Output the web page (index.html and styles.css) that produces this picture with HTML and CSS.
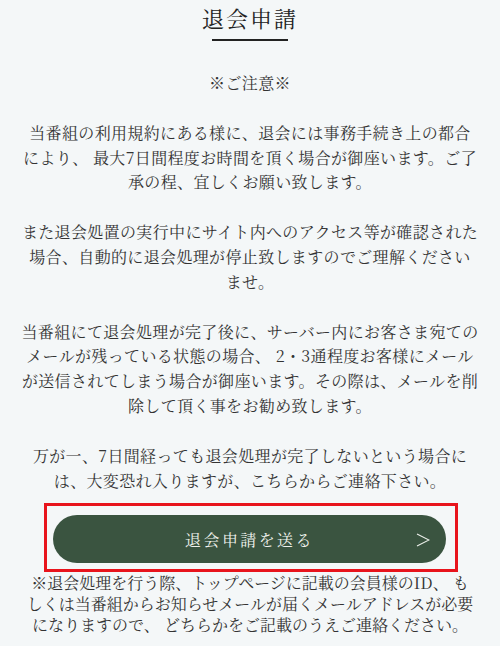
FILE: index.html
```html
<!DOCTYPE html>
<html lang="ja">
  <head>
    <meta charset="utf-8" />
    <title>退会申請</title>
    <link rel="stylesheet" href="styles.css">
  </head>
  <body>
    <div class="withdraw">
      <h1 class="withdraw-title">退会申請</h1>

      <p class="notice-head">※ご注意※</p>
      <p class="notice">当番組の利用規約にある様に、退会には事務手続き上の都合<br>により、 最大7日間程度お時間を頂く場合が御座います。ご了承の程、宜しくお願い致します。</p>
      <p class="notice">また退会処置の実行中にサイト内へのアクセス等が確認された場合、自動的に退会処理が停止致しますのでご理解ください<br>ませ。</p>
      <p class="notice">当番組にて退会処理が完了後に、サーバー内にお客さま宛てのメールが残っている状態の場合、 2・3通程度お客様にメールが送信されてしまう場合が御座います。その際は、メールを削除して頂く事をお勧め致します。</p>
      <p class="notice notice-last">万が一、7日間経っても退会処理が完了しないという場合には、大変恐れ入りますが、こちらからご連絡下さい。</p>

      <div class="button-frame">
        <a class="send-btn" href="#">
          退会申請を送る
          <svg class="send-arrow" width="14" height="14" viewBox="0 0 14 14">
            <polyline points="1,1 13,7 1,13" fill="none" stroke="currentColor" stroke-width="1.1" />
          </svg>
        </a>
      </div>

      <p class="foot-note">※退会処理を行う際、トップページに記載の会員様のID、 も<br>しくは当番組からお知らせメールが届くメールアドレスが必要になりますので、 どちらかをご記載のうえご連絡ください。</p>
    </div>
  </body>
</html>
```

FILE: styles.css
```css
body {
  margin: 0;
  padding: 0;
  background: #f4f7f8;
  color: #333;
  font-family: "Noto Serif CJK JP", "Liberation Serif", "Noto Sans CJK JP", serif;
}

.withdraw {
  padding: 3px 20px 0;
  text-align: center;
}

.withdraw-title {
  margin: 0;
  font-size: 22px;
  font-weight: normal;
  line-height: 30px;
  letter-spacing: 2px;
  color: #222;
}

/* short rule under the title */
.withdraw-title::after {
  content: "";
  display: block;
  width: 76px;
  height: 2px;
  margin: 6px auto 0;
  background: #222;
}

.notice-head,
.notice {
  margin: 0 0 25px;
  font-size: 16px;
  line-height: 24.8px;
  letter-spacing: 0.35px;
}

.notice-head {
  margin-top: 30px;
}

.notice-last {
  margin-bottom: 0;
}

.button-frame {
  width: 414px;
  box-sizing: border-box;
  margin: 10px 0 0 24px;
  padding: 9px 9px 6px 6px;
  border: 3px solid #e8141c;
}

.send-btn {
  position: relative;
  display: flex;
  align-items: center;
  justify-content: center;
  height: 48px;
  border-radius: 24px;
  background: #3a5440;
  color: #eef1ec;
  font-size: 16px;
  letter-spacing: 2.4px;
  text-decoration: none;
}

.send-arrow {
  position: absolute;
  right: 16px;
  top: 18px;
}

.foot-note {
  margin: 0;
  font-size: 16px;
  line-height: 21px;
}
```
